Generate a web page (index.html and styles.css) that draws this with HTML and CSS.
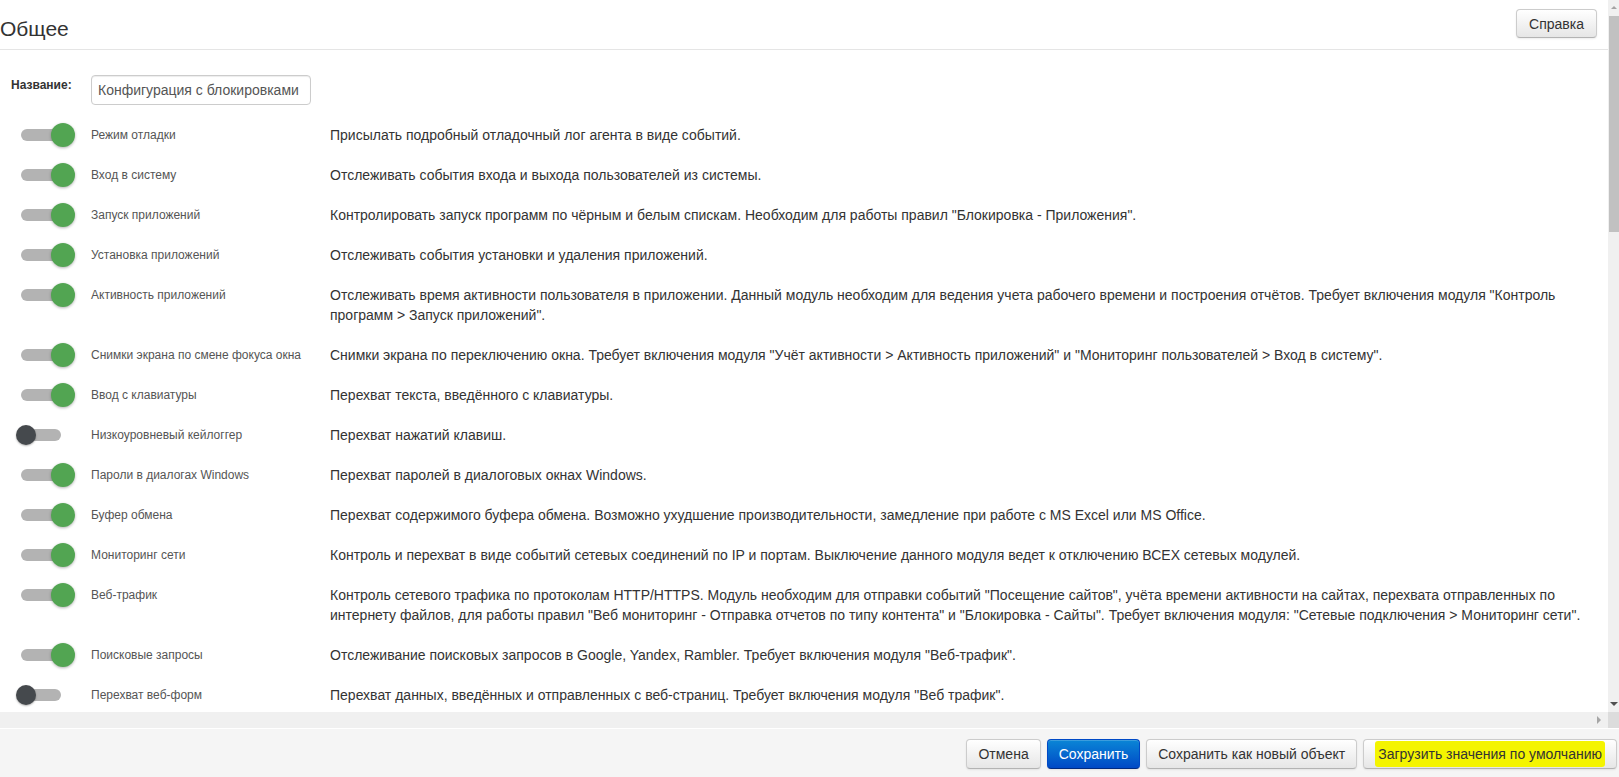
FILE: index.html
```html
<!DOCTYPE html>
<html lang="ru">
<head>
  <meta charset="UTF-8" />
  <title>Общее</title>
  <link rel="stylesheet" href="styles.css">
</head>
<body>
  <div class="dialog">
    <div class="viewport">
      <div class="pane">
        <div class="head">
          <h1 class="title">Общее</h1>
          <button class="btn btn-help">Справка</button>
        </div>

        <div class="form">
          <div class="name-row">
            <label class="name-label">Название:</label>
            <input type="text" class="name-input" value="Конфигурация с блокировками">
          </div>

          <div class="opt">
            <div class="sw-cell"><span class="switch on"><span class="knob"></span></span></div>
            <div class="opt-label">Режим отладки</div>
            <div class="opt-desc">Присылать подробный отладочный лог агента в виде событий.</div>
          </div>
          <div class="opt">
            <div class="sw-cell"><span class="switch on"><span class="knob"></span></span></div>
            <div class="opt-label">Вход в систему</div>
            <div class="opt-desc">Отслеживать события входа и выхода пользователей из системы.</div>
          </div>
          <div class="opt">
            <div class="sw-cell"><span class="switch on"><span class="knob"></span></span></div>
            <div class="opt-label">Запуск приложений</div>
            <div class="opt-desc">Контролировать запуск программ по чёрным и белым спискам. Необходим для работы правил "Блокировка - Приложения".</div>
          </div>
          <div class="opt">
            <div class="sw-cell"><span class="switch on"><span class="knob"></span></span></div>
            <div class="opt-label">Установка приложений</div>
            <div class="opt-desc">Отслеживать события установки и удаления приложений.</div>
          </div>
          <div class="opt">
            <div class="sw-cell"><span class="switch on"><span class="knob"></span></span></div>
            <div class="opt-label">Активность приложений</div>
            <div class="opt-desc">Отслеживать время активности пользователя в приложении. Данный модуль необходим для ведения учета рабочего времени и построения отчётов. Требует включения модуля "Контроль программ &gt; Запуск приложений".</div>
          </div>
          <div class="opt">
            <div class="sw-cell"><span class="switch on"><span class="knob"></span></span></div>
            <div class="opt-label">Снимки экрана по смене фокуса окна</div>
            <div class="opt-desc">Снимки экрана по переключению окна. Требует включения модуля "Учёт активности &gt; Активность приложений" и "Мониторинг пользователей &gt; Вход в систему".</div>
          </div>
          <div class="opt">
            <div class="sw-cell"><span class="switch on"><span class="knob"></span></span></div>
            <div class="opt-label">Ввод с клавиатуры</div>
            <div class="opt-desc">Перехват текста, введённого с клавиатуры.</div>
          </div>
          <div class="opt">
            <div class="sw-cell"><span class="switch"><span class="knob"></span></span></div>
            <div class="opt-label">Низкоуровневый кейлоггер</div>
            <div class="opt-desc">Перехват нажатий клавиш.</div>
          </div>
          <div class="opt">
            <div class="sw-cell"><span class="switch on"><span class="knob"></span></span></div>
            <div class="opt-label">Пароли в диалогах Windows</div>
            <div class="opt-desc">Перехват паролей в диалоговых окнах Windows.</div>
          </div>
          <div class="opt">
            <div class="sw-cell"><span class="switch on"><span class="knob"></span></span></div>
            <div class="opt-label">Буфер обмена</div>
            <div class="opt-desc">Перехват содержимого буфера обмена. Возможно ухудшение производительности, замедление при работе с MS Excel или MS Office.</div>
          </div>
          <div class="opt">
            <div class="sw-cell"><span class="switch on"><span class="knob"></span></span></div>
            <div class="opt-label">Мониторинг сети</div>
            <div class="opt-desc">Контроль и перехват в виде событий сетевых соединений по IP и портам. Выключение данного модуля ведет к отключению ВСЕХ сетевых модулей.</div>
          </div>
          <div class="opt">
            <div class="sw-cell"><span class="switch on"><span class="knob"></span></span></div>
            <div class="opt-label">Веб-трафик</div>
            <div class="opt-desc">Контроль сетевого трафика по протоколам HTTP/HTTPS. Модуль необходим для отправки событий "Посещение сайтов", учёта времени активности на сайтах, перехвата отправленных по интернету файлов, для работы правил "Веб мониторинг - Отправка отчетов по типу контента" и "Блокировка - Сайты". Требует включения модуля: "Сетевые подключения &gt; Мониторинг сети".</div>
          </div>
          <div class="opt">
            <div class="sw-cell"><span class="switch on"><span class="knob"></span></span></div>
            <div class="opt-label">Поисковые запросы</div>
            <div class="opt-desc">Отслеживание поисковых запросов в Google, Yandex, Rambler. Требует включения модуля "Веб-трафик".</div>
          </div>
          <div class="opt">
            <div class="sw-cell"><span class="switch"><span class="knob"></span></span></div>
            <div class="opt-label">Перехват веб-форм</div>
            <div class="opt-desc">Перехват данных, введённых и отправленных с веб-страниц. Требует включения модуля "Веб трафик".</div>
          </div>
        </div>
      </div>

      <!-- полосы прокрутки -->
      <div class="vscroll">
        <div class="sb-btn"><span class="arr-up"></span></div>
        <div class="v-thumb"></div>
        <div class="sb-track"></div>
        <div class="sb-btn"><span class="arr-down"></span></div>
      </div>
      <div class="hscroll">
        <div class="sb-track"></div>
        <div class="sb-btn-h"><span class="arr-right"></span></div>
      </div>
      <div class="corner"></div>
    </div>

    <div class="footer">
      <button class="btn">Отмена</button>
      <button class="btn btn-primary">Сохранить</button>
      <button class="btn">Сохранить как новый объект</button>
      <button class="btn"><span class="marker">Загрузить значения по умолчанию</span></button>
    </div>
  </div>
</body>
</html>
```

FILE: styles.css
```css
/* Базовые настройки */
html, body {
  margin: 0;
  padding: 0;
  height: 100%;
}

body {
  overflow: hidden;
  background: #fff;
  color: #333;
  font-family: "Liberation Sans", Arial, sans-serif;
  font-size: 14px;
}

.dialog {
  height: 100vh;
  display: flex;
  flex-direction: column;
}

/* Область с прокруткой */
.viewport {
  flex: 1;
  min-height: 0;
  display: grid;
  grid-template-columns: 1fr 11px;
  grid-template-rows: 1fr 16px;
}

.pane {
  overflow: hidden;
  background: #fff;
}

/* Заголовок */
.head {
  display: flex;
  justify-content: space-between;
  align-items: flex-start;
  height: 49px;
  border-bottom: 1px solid #e5e5e5;
}

.title {
  margin: 17px 0 0 0;
  font-size: 21px;
  line-height: 24px;
  font-weight: normal;
  color: #333;
}

/* Кнопки */
.btn {
  height: 30px;
  padding: 0 11px;
  font-family: "Liberation Sans", Arial, sans-serif;
  font-size: 14px;
  color: #333;
  background: linear-gradient(#ffffff, #e6e6e6);
  border: 1px solid #ccc;
  border-bottom-color: #b3b3b3;
  border-radius: 4px;
  box-shadow: inset 0 1px 0 rgba(255, 255, 255, 0.2), 0 1px 2px rgba(0, 0, 0, 0.08);
  cursor: pointer;
}

.btn-help {
  height: 29px;
  padding: 0 12px;
  margin: 9px 11px 0 0;
}

.btn-primary {
  color: #fff;
  background: linear-gradient(#0a86d6, #0049c6);
  border-color: #0049c6 #0049c6 #002a80;
}

.marker {
  background: #f4f400;
  padding: 5px 3px;
  border-radius: 3px;
}

/* Форма */
.form {
  padding: 25px 0 0 0;
}

.name-row {
  display: flex;
  align-items: flex-start;
  padding-left: 11px;
  margin-bottom: 10px;
}

.name-label {
  width: 80px;
  line-height: 20px;
  font-size: 12px;
  font-weight: bold;
  color: #333;
}

.name-input {
  width: 220px;
  height: 30px;
  box-sizing: border-box;
  padding: 0 6px;
  border: 1px solid #ccc;
  border-radius: 4px;
  box-shadow: inset 0 1px 1px rgba(0, 0, 0, 0.075);
  font-family: "Liberation Sans", Arial, sans-serif;
  font-size: 14px;
  color: #555;
}

/* Строки модулей */
.opt {
  display: grid;
  grid-template-columns: 91px 239px 1fr;
  padding: 10px 10px 10px 0;
  line-height: 20px;
}

.opt-label {
  font-size: 12px;
  color: #555;
}

.opt-desc {
  font-size: 14px;
  color: #333;
}

/* Переключатель */
.switch {
  position: relative;
  display: block;
  width: 40px;
  height: 12px;
  margin: 4px 0 0 21px;
  border-radius: 6px;
  background: #b3b3b3;
}

.knob {
  position: absolute;
  top: -4px;
  left: -5px;
  width: 20px;
  height: 20px;
  border-radius: 50%;
  background: #45494d;
  box-shadow: 0 1px 2px rgba(0, 0, 0, 0.3);
}

.switch.on .knob {
  top: -6px;
  left: 30px;
  width: 24px;
  height: 24px;
  background: #52a552;
  box-shadow: 0 1px 3px rgba(0, 0, 0, 0.3);
}

/* Полосы прокрутки */
.vscroll {
  display: flex;
  flex-direction: column;
  background: #f0f0f0;
}

.sb-btn {
  height: 16px;
  display: flex;
  align-items: center;
  justify-content: center;
}

.v-thumb {
  height: 216px;
  margin-left: 1px;
  background: #c1c1c1;
}

.sb-track {
  flex: 1;
}

.arr-up {
  width: 0;
  height: 0;
  border-left: 3px solid transparent;
  border-right: 3px solid transparent;
  border-bottom: 3px solid #a3a3a3;
  margin-top: -2px;
}

.arr-down {
  width: 0;
  height: 0;
  border-left: 4px solid transparent;
  border-right: 4px solid transparent;
  border-top: 4px solid #505050;
}

.hscroll {
  display: flex;
  background: #f0f0f0;
}

.sb-btn-h {
  width: 17px;
  display: flex;
  align-items: center;
  justify-content: center;
}

.arr-right {
  width: 0;
  height: 0;
  border-top: 4px solid transparent;
  border-bottom: 4px solid transparent;
  border-left: 4px solid #a6a6a6;
  margin-right: 2px;
}

.corner {
  background: #dcdcdc;
}

/* Подвал с кнопками */
.footer {
  height: 49px;
  box-sizing: border-box;
  border-top: 1px solid #fff;
  background: #f5f5f5;
  display: flex;
  justify-content: flex-end;
  align-items: flex-start;
  gap: 6px;
  padding: 10px 2px 0 0;
}
```
